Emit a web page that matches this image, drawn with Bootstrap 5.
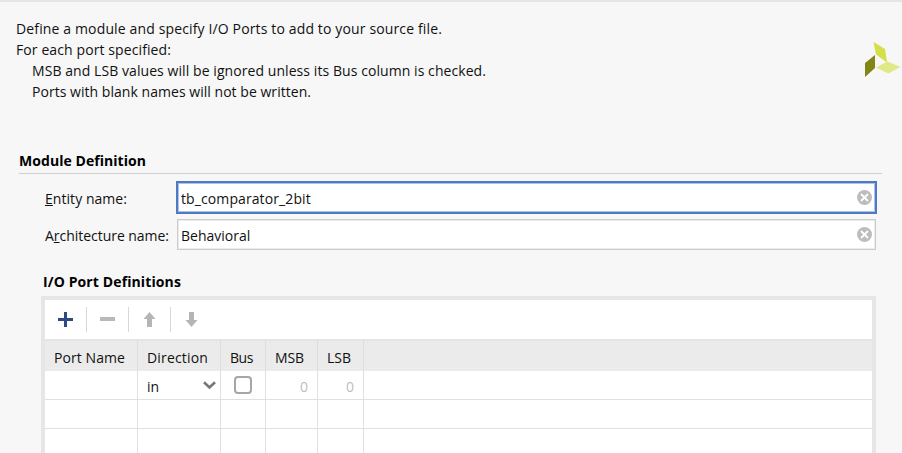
<!DOCTYPE html>
<html lang="en">
<head>
<meta charset="utf-8">
<title>Define Module</title>
<link href="https://cdn.jsdelivr.net/npm/bootstrap@5.3.0/dist/css/bootstrap.min.css" rel="stylesheet">
<style>
body{background:#f7f7f7;color:#111;font:14px/21px "Open Sans","Noto Sans",sans-serif;height:453px;overflow:hidden}
.wizard{height:453px;border-top:2px solid #e6e6e6}
.intro{height:148px;padding:16px 0 0 16px}
.intro p{white-space:nowrap}
.sub-line{padding-left:16px}
.logo{width:37px;height:36px;margin-top:24px;margin-right:1px}
.section-title{font-weight:700;color:#000;white-space:nowrap}
.module-head{margin:0 20px 0 19px;height:24px;border-bottom:1px solid #cfcfcf}
.fields{margin:7px 25px 0 45px}
.field-label{width:131px;white-space:nowrap;padding-top:2px}
.field-label.lower{padding-top:6px}
.field-box{height:33px;border:2px solid #507abf;box-shadow:inset 0 0 0 1px #a9c4f0;background:#fff;padding:0 3px}
.field-box.plain{height:31px;border:1px solid #cbcbcb;box-shadow:inset 0 0 0 1px #ececec;margin:5px 1px 0;padding:0 3px}
.field-box input{border:0;outline:0;padding:2px 0 0;background:transparent;color:#111;min-width:0;letter-spacing:.1px}
.field-box.plain input{letter-spacing:0}
.port-head{margin:21px 0 0 43px}
.panel{margin:4px 26px 0 41px;border:4px solid #e6e6e6;border-bottom:0;height:160px;background:#fff}
.tools{height:39px}
.tool{width:42px;height:25px}
.tool:first-child{width:41px}
.tool+.tool{border-left:1px solid #d8d8d8}
.tool svg{margin-right:1px}
.tool:first-child svg{margin-right:0}
.ports{table-layout:fixed;width:100%;border-collapse:separate;border-spacing:0}
.ports th{font-weight:400;height:32px;background:#ebebeb;border-top:2px solid #e4e4e4;border-right:1px solid #dedede;padding:3px 0 0 9px;white-space:nowrap}
.ports td{height:29px;border-right:1px solid #e0e0e0;border-bottom:1px solid #e0e0e0;padding:3px 9px 0;white-space:nowrap}
.ports th:last-child,.ports td:last-child{border-right:0}
.ports .num{color:#bdbdbd;text-align:right;padding-right:9px}
.chevron{margin-bottom:2px}
.tick{width:18px;height:18px;border:2px solid #a6a6a6;border-radius:4px;background:#fff}
.c1{width:93px}.c2{width:83px}.c3{width:45px}.c4{width:52px}.c5{width:46px}
svg{display:block;flex:none}
</style>
<script src="https://cdn.jsdelivr.net/npm/bootstrap@5.3.0/dist/js/bootstrap.bundle.min.js"></script>
</head>
<body>
<main class="wizard">
  <header class="intro d-flex justify-content-between">
    <div>
      <p class="m-0"><span data-w="426">Define a module and specify I/O Ports to add to your source file.</span></p>
      <p class="m-0"><span data-w="155">For each port specified:</span></p>
      <p class="m-0 sub-line"><span data-w="454">MSB and LSB values will be ignored unless its Bus column is checked.</span></p>
      <p class="m-0 sub-line"><span data-w="279">Ports with blank names will not be written.</span></p>
    </div>
    <svg class="logo" viewBox="0 0 37 36"><path fill="#d3e04a" d="M9.5 0 21 7 23 20.5 12 12.5Z"/><path fill="#818614" d="M11 13V26L1 35V21Z"/><path fill="#dfe986" d="M12 25.5 23.5 19.5 36.5 25 24.5 31.5Z"/></svg>
  </header>
  <section>
    <div class="module-head section-title"><span data-w="127">Module Definition</span></div>
    <div class="fields">
      <div class="d-flex align-items-center">
        <label class="field-label" for="entity"><span data-w="82"><u>E</u>ntity name:</span></label>
        <div class="field-box d-flex align-items-center flex-grow-1">
          <input class="flex-grow-1" id="entity" value="tb_comparator_2bit">
          <svg width="15" height="15" viewBox="0 0 15 15"><circle cx="7.5" cy="7.5" r="7.5" fill="#bdbdbd"/><path d="m4 4 7 7M11 4l-7 7" stroke="#fff" stroke-width="1.8"/></svg>
        </div>
      </div>
      <div class="d-flex align-items-center">
        <label class="field-label lower" for="arch"><span data-w="124">A<u>r</u>chitecture name:</span></label>
        <div class="field-box plain d-flex align-items-center flex-grow-1">
          <input class="flex-grow-1" id="arch" value="Behavioral">
          <svg width="15" height="15" viewBox="0 0 15 15"><circle cx="7.5" cy="7.5" r="7.5" fill="#bdbdbd"/><path d="m4 4 7 7M11 4l-7 7" stroke="#fff" stroke-width="1.8"/></svg>
        </div>
      </div>
    </div>
  </section>
  <section>
    <div class="port-head section-title"><span data-w="138">I/O Port Definitions</span></div>
    <div class="panel">
      <div class="tools d-flex align-items-center">
        <div class="tool d-flex align-items-center justify-content-center"><svg width="15" height="15"><path d="M7.5 0v15M0 7.5h15" stroke="#2f4a83" stroke-width="3"/></svg></div>
        <div class="tool d-flex align-items-center justify-content-center"><svg width="15" height="15"><path d="M0 7h15" stroke="#b9b9b9" stroke-width="4"/></svg></div>
        <div class="tool d-flex align-items-center justify-content-center"><svg width="13" height="15"><path fill="#b5b5b5" d="M6.5 0 12.5 7H9V15H4V7H.5Z"/></svg></div>
        <div class="tool d-flex align-items-center justify-content-center"><svg width="13" height="15"><path fill="#b5b5b5" d="M6.5 15 .5 8H4V0H9V8H12.5Z"/></svg></div>
      </div>
      <table class="ports">
        <colgroup><col class="c1"><col class="c2"><col class="c3"><col class="c4"><col class="c5"><col></colgroup>
        <thead><tr><th><span data-w="71">Port Name</span></th><th><span data-w="61">Direction</span></th><th><span data-w="23">Bus</span></th><th><span data-w="29">MSB</span></th><th><span data-w="24">LSB</span></th><th></th></tr></thead>
        <tbody>
          <tr><td></td><td class="pe-1"><div class="d-flex align-items-center justify-content-between">in<svg class="chevron" width="13" height="9"><path d="m1 1.2 5.5 5.3L12 1.2" fill="none" stroke="#777" stroke-width="2.6"/></svg></div></td><td class="p-0"><div class="tick mx-auto"></div></td><td class="num">0</td><td class="num">0</td><td></td></tr>
          <tr><td></td><td></td><td></td><td></td><td></td><td></td></tr>
          <tr><td></td><td></td><td></td><td></td><td></td><td></td></tr>
        </tbody>
      </table>
    </div>
  </section>
</main>
<script>
// Track each label so that it fills its designed width.
document.querySelectorAll('[data-w]').forEach(function (el) {
  var extra = (el.dataset.w - el.getBoundingClientRect().width) / el.textContent.length;
  el.style.letterSpacing = extra + 'px';
});
</script>
</body>
</html>
